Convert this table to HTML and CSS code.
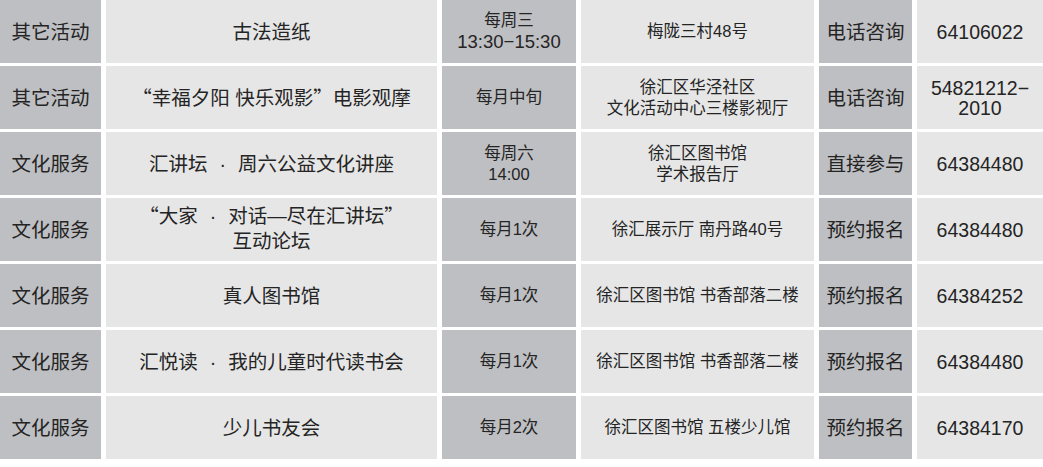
FILE: index.html
```html
<!DOCTYPE html>
<html lang="zh-CN">
<head>
<meta charset="utf-8">
<title>活动表</title>
<link rel="stylesheet" href="styles.css">
</head>
<body>
<div class="table">
  <div class="cell dark big"><div>其它活动</div></div>
  <div class="cell light big"><div>古法造纸</div></div>
  <div class="cell dark small"><div>每周三<br><span class="time">13:30−15:30</span></div></div>
  <div class="cell light small"><div>梅陇三村48号</div></div>
  <div class="cell dark big"><div>电话咨询</div></div>
  <div class="cell light big"><div>64106022</div></div>

  <div class="cell dark big"><div>其它活动</div></div>
  <div class="cell light big"><div><span class="cjk">“</span>幸福夕阳 快乐观影<span class="cjk">”</span>电影观摩</div></div>
  <div class="cell dark small"><div>每月中旬</div></div>
  <div class="cell light small"><div>徐汇区华泾社区<br>文化活动中心三楼影视厅</div></div>
  <div class="cell dark big"><div>电话咨询</div></div>
  <div class="cell light big"><div class="tight">54821212−<br>2010</div></div>

  <div class="cell dark big"><div>文化服务</div></div>
  <div class="cell light big"><div>汇讲坛<span class="dot">·</span>周六公益文化讲座</div></div>
  <div class="cell dark small"><div>每周六<br>14:00</div></div>
  <div class="cell light small"><div>徐汇区图书馆<br>学术报告厅</div></div>
  <div class="cell dark big"><div>直接参与</div></div>
  <div class="cell light big"><div>64384480</div></div>

  <div class="cell dark big"><div>文化服务</div></div>
  <div class="cell light big"><div class="loose"><span class="cjk">“</span>大家<span class="dot">·</span>对话—尽在汇讲坛<span class="cjk">”</span><br>互动论坛</div></div>
  <div class="cell dark small"><div>每月1次</div></div>
  <div class="cell light small"><div>徐汇展示厅 南丹路40号</div></div>
  <div class="cell dark big"><div>预约报名</div></div>
  <div class="cell light big"><div>64384480</div></div>

  <div class="cell dark big"><div>文化服务</div></div>
  <div class="cell light big"><div>真人图书馆</div></div>
  <div class="cell dark small"><div>每月1次</div></div>
  <div class="cell light small"><div>徐汇区图书馆 书香部落二楼</div></div>
  <div class="cell dark big"><div>预约报名</div></div>
  <div class="cell light big"><div>64384252</div></div>

  <div class="cell dark big"><div>文化服务</div></div>
  <div class="cell light big"><div>汇悦读<span class="dot">·</span>我的儿童时代读书会</div></div>
  <div class="cell dark small"><div>每月1次</div></div>
  <div class="cell light small"><div>徐汇区图书馆 书香部落二楼</div></div>
  <div class="cell dark big"><div>预约报名</div></div>
  <div class="cell light big"><div>64384480</div></div>

  <div class="cell dark big"><div>文化服务</div></div>
  <div class="cell light big"><div>少儿书友会</div></div>
  <div class="cell dark small"><div>每月2次</div></div>
  <div class="cell light small"><div>徐汇区图书馆 五楼少儿馆</div></div>
  <div class="cell dark big"><div>预约报名</div></div>
  <div class="cell light big"><div>64384170</div></div>
</div>
</body>
</html>
```

FILE: styles.css
```css
html, body {
  margin: 0;
  padding: 0;
  background: #ffffff;
}

body {
  font-family: "Liberation Sans", "Noto Sans CJK SC", sans-serif;
  color: #242424;
}

.table {
  display: grid;
  grid-template-columns: 101px 331px 134px 233px 93px 126px;
  grid-auto-rows: 63px;
  column-gap: 5px;
  row-gap: 3px;
}

.cell {
  display: flex;
  align-items: center;
  justify-content: center;
  text-align: center;
  white-space: nowrap;
}

.dark {
  background: #bebfc2;
}

.light {
  background: #e6e6e6;
}

.big {
  font-size: 19.5px;
  line-height: 24px;
}

.small {
  font-size: 16.5px;
  line-height: 21px;
}

.time {
  font-size: 18.5px;
}

.tight {
  line-height: 20px;
}

.loose {
  line-height: 25px;
  margin-top: -4px;
}

.cjk {
  font-family: "Noto Sans CJK SC", sans-serif;
}

.dot {
  display: inline-block;
  margin: 0 12px;
}
```
